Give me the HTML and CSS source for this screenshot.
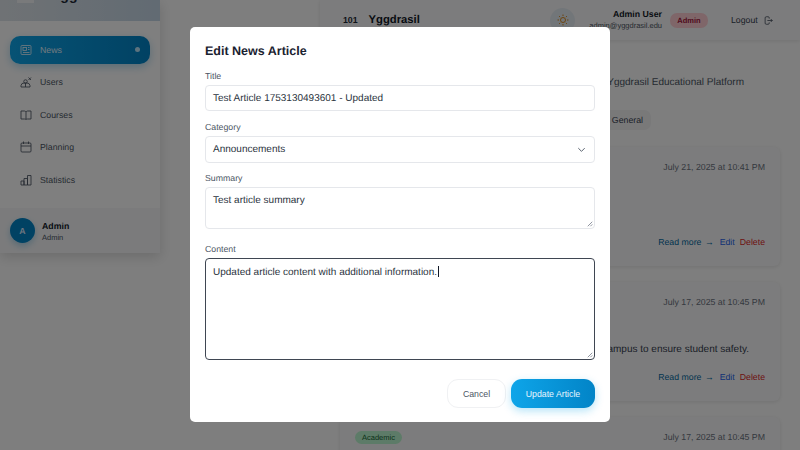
FILE: index.html
```html
<!DOCTYPE html>
<html>
<head>
    <title>Yggdrasil - News</title>
    <link rel="stylesheet" href="styles.css">
</head>
<body>
    <div class="app">
        <aside class="sidebar">
            <div class="brand"><span class="brand-logo"></span><span class="brand-name">Ygg</span></div>
            <nav class="side-nav">
                <a class="nav-item active" href="#">
                    <svg class="nav-icon" viewBox="0 0 24 24"><rect x="2" y="3" width="20" height="18" rx="2"/><rect x="6" y="7" width="7" height="6"/><path d="M16 7h3M16 11h3M6 17h13"/></svg>
                    <span>News</span><span class="nav-dot"></span>
                </a>
                <a class="nav-item" href="#">
                    <svg class="nav-icon" viewBox="0 0 24 24"><circle cx="11" cy="11" r="3.5"/><path d="M2 22v-3a6 6 0 0 1 6-5h6a6 6 0 0 1 6 5v3zM11 14v8M17 3l5 5M22 3l-5 5"/></svg>
                    <span>Users</span>
                </a>
                <a class="nav-item" href="#">
                    <svg class="nav-icon" viewBox="0 0 24 24"><path d="M12 6a4 4 0 0 0-3-2H2v16h7a4 4 0 0 1 3 1 4 4 0 0 1 3-1h7V4h-7a4 4 0 0 0-3 2zM12 6v15"/></svg>
                    <span>Courses</span>
                </a>
                <a class="nav-item" href="#">
                    <svg class="nav-icon" viewBox="0 0 24 24"><rect x="2" y="4" width="20" height="18" rx="2"/><path d="M7 1v5M17 1v5M2 10h20"/></svg>
                    <span>Planning</span>
                </a>
                <a class="nav-item" href="#">
                    <svg class="nav-icon" viewBox="0 0 24 24"><path d="M2 14h6v8H2zM8 9h7v13H8zM15 3h7v19h-7z"/></svg>
                    <span>Statistics</span>
                </a>
            </nav>
            <div class="side-user">
                <div class="avatar">A</div>
                <div class="side-user-text">
                    <div class="side-user-name">Admin</div>
                    <div class="side-user-role">Admin</div>
                </div>
            </div>
        </aside>

        <main class="content">
            <header class="topbar">
                <div class="topbar-brand"><span class="topbar-num">101</span><span class="topbar-name">Yggdrasil</span></div>
                <div class="theme-btn">
                    <svg viewBox="0 0 24 24"><circle cx="12" cy="12" r="5"/><path d="M12 1v3M12 20v3M1 12h3M20 12h3M4.2 4.2l2.1 2.1M17.7 17.7l2.1 2.1M4.2 19.8l2.1-2.1M17.7 6.3l2.1-2.1"/></svg>
                </div>
                <div class="topbar-user">
                    <div class="topbar-user-name">Admin User</div>
                    <div class="topbar-user-mail">admin@yggdrasil.edu</div>
                </div>
                <span class="role-badge">Admin</span>
                <a class="logout" href="#">Logout
                    <svg viewBox="0 0 24 24"><path d="M14 7V5a3 3 0 0 0-3-3H6a3 3 0 0 0-3 3v14a3 3 0 0 0 3 3h5a3 3 0 0 0 3-3v-2M9 12h13M18 8l4 4-4 4"/></svg>
                </a>
            </header>

            <p class="intro">Yggdrasil Educational Platform</p>
            <div class="filters"><span class="filter-pill">General</span></div>

            <article class="card card-tall">
                <div class="card-head"><span></span><span class="card-date">July 21, 2025 at 10:41 PM</span></div>
                <div class="card-links"><a class="link-read" href="#">Read more <span class="arrow">→</span></a><a class="link-edit" href="#">Edit</a><a class="link-delete" href="#">Delete</a></div>
            </article>
            <article class="card card-tall">
                <div class="card-head"><span></span><span class="card-date">July 17, 2025 at 10:45 PM</span></div>
                <p class="card-summary">campus to ensure student safety.</p>
                <div class="card-links"><a class="link-read" href="#">Read more <span class="arrow">→</span></a><a class="link-edit" href="#">Edit</a><a class="link-delete" href="#">Delete</a></div>
            </article>
            <article class="card">
                <div class="card-head"><span class="tag-academic">Academic</span><span class="card-date">July 17, 2025 at 10:45 PM</span></div>
            </article>
        </main>
    </div>

    <div class="overlay">
        <form class="modal">
            <h2 class="modal-title">Edit News Article</h2>

            <label class="field-label">Title</label>
            <div class="field-box field-input">Test Article 1753130493601 - Updated</div>

            <label class="field-label">Category</label>
            <div class="field-box field-select">
                <span>Announcements</span>
                <svg viewBox="0 0 24 24"><path d="M5 9l7 7 7-7"/></svg>
            </div>

            <label class="field-label">Summary</label>
            <div class="field-box field-summary">Test article summary
                <svg class="grip" viewBox="0 0 8 8"><path d="M1 7l6-6M4.5 7L7 4.5"/></svg>
            </div>

            <label class="field-label">Content</label>
            <div class="field-box field-content"><span>Updated article content with additional information.<span class="caret"></span></span>
                <svg class="grip" viewBox="0 0 8 8"><path d="M1 7l6-6M4.5 7L7 4.5"/></svg>
            </div>

            <div class="modal-actions">
                <button class="btn-cancel" type="button">Cancel</button>
                <button class="btn-save" type="button">Update Article</button>
            </div>
        </form>
    </div>
</body>
</html>
```

FILE: styles.css
```css
* {
    box-sizing: border-box;
}
html, body {
    margin: 0;
    padding: 0;
    height: 450px;
    overflow: hidden;
}
body {
    font-family: "Liberation Sans", Arial, sans-serif;
    text-rendering: geometricPrecision;
    background-color: #fdfdfd;
    color: #1f2937;
}
a {
    text-decoration: none;
}

/* page behind the dialog, scrolled down a little */
.app {
    display: flex;
    height: 450px;
    overflow: hidden;
}
.sidebar {
    width: 160px;
    height: 253px;
    flex-shrink: 0;
    display: flex;
    flex-direction: column;
    background-color: #fff;
    box-shadow: 0 4px 12px rgba(0, 0, 0, 0.15);
}
.brand {
    height: 21px;
    flex-shrink: 0;
    display: flex;
    align-items: flex-start;
    gap: 17px;
    padding-left: 17px;
    background: linear-gradient(90deg, #dfe5ea, #c4d6e6);
    overflow: hidden;
}
.brand-logo {
    width: 17px;
    height: 3px;
    background-color: #f3f4f6;
}
.brand-name {
    margin-top: -13px;
    font-size: 14px;
    line-height: 16px;
    font-weight: bold;
}
.side-nav {
    flex: 1;
    padding: 15px 10px 0;
    display: flex;
    flex-direction: column;
    gap: 5px;
}
.nav-item {
    height: 27.5px;
    display: flex;
    align-items: center;
    gap: 8px;
    padding-left: 10px;
    border-radius: 10px;
    font-size: 8.75px;
    color: #4b5563;
}
.nav-item.active {
    background: linear-gradient(90deg, #0ea5e9, #0284c7);
    color: #e0f2fe;
    box-shadow: 0 3px 8px rgba(2, 132, 199, 0.3);
}
.nav-icon {
    width: 12px;
    height: 12px;
    fill: none;
    stroke: currentColor;
    stroke-width: 1.7;
}
.nav-dot {
    width: 5px;
    height: 5px;
    margin-left: auto;
    margin-right: 10px;
    border-radius: 50%;
    background-color: #bae6fd;
}
.side-user {
    height: 45px;
    display: flex;
    align-items: center;
    gap: 7px;
    padding-left: 10px;
    background-color: #f6f7f9;
}
.avatar {
    width: 25px;
    height: 25px;
    border-radius: 50%;
    display: flex;
    align-items: center;
    justify-content: center;
    background-color: #0284c7;
    color: #dbeafe;
    font-size: 8.75px;
    font-weight: bold;
    box-shadow: 0 3px 6px rgba(2, 132, 199, 0.3);
}
.side-user-text {
    padding-top: 3px;
}
.side-user-name {
    font-size: 8.75px;
    line-height: 11px;
    font-weight: bold;
    color: #111827;
}
.side-user-role {
    font-size: 7.5px;
    line-height: 11px;
    color: #4b5563;
}

.content {
    width: 480px;
    margin-left: 160px;
}
.topbar {
    height: 40px;
    display: flex;
    align-items: center;
    padding-left: 23px;
    background-color: #f9f9fa;
    box-shadow: 0 1px 4px rgba(0, 0, 0, 0.1);
}
.topbar-brand {
    width: 207px;
    display: flex;
    align-items: center;
    gap: 11px;
}
.topbar-num {
    font-size: 8.75px;
    font-weight: bold;
    color: #1f2937;
}
.topbar-name {
    font-size: 11.25px;
    font-weight: bold;
    color: #111827;
}
.theme-btn {
    width: 25px;
    height: 25px;
    border-radius: 50%;
    display: flex;
    align-items: center;
    justify-content: center;
    background-color: #e5ecf3;
}
.theme-btn svg {
    width: 12px;
    height: 12px;
    fill: none;
    stroke: #d98a1f;
    stroke-width: 2;
}
.topbar-user {
    width: 87px;
    text-align: right;
}
.topbar-user-name {
    font-size: 8.75px;
    line-height: 11px;
    font-weight: bold;
    color: #111827;
}
.topbar-user-mail {
    font-size: 7.5px;
    line-height: 11px;
    color: #4b5563;
}
.role-badge {
    width: 38px;
    margin-left: 8px;
    padding: 3px 0;
    border-radius: 7px;
    text-align: center;
    background-color: #fecdd3;
    color: #9f1239;
    font-size: 7.5px;
    font-weight: bold;
}
.logout {
    margin-left: 23px;
    display: flex;
    align-items: center;
    gap: 6px;
    font-size: 8.75px;
    color: #374151;
}
.logout svg {
    width: 9px;
    height: 9px;
    fill: none;
    stroke: currentColor;
    stroke-width: 2;
}
.intro {
    margin: 37px 56px 0 0;
    text-align: right;
    font-size: 10px;
    line-height: 12px;
    color: #4b5563;
}
.filters {
    margin: 21px 149px 0 0;
    display: flex;
    justify-content: flex-end;
}
.filter-pill {
    padding: 5px 8px;
    line-height: 10px;
    border-radius: 7px;
    background-color: #f2f2f3;
    font-size: 8.75px;
    color: #374151;
}
.card {
    width: 440px;
    margin: 16px 0 0 20px;
    padding: 15px;
    border-radius: 6px;
    background-color: #f9f9fa;
    box-shadow: 0 1px 4px rgba(0, 0, 0, 0.1);
}
.filters + .card {
    margin-top: 17px;
}
.card-tall {
    height: 119px;
    display: flex;
    flex-direction: column;
    padding-bottom: 19px;
}
.card-head {
    height: 10px;
    display: flex;
    justify-content: space-between;
    align-items: center;
}
.card-date {
    font-size: 8.75px;
    color: #6b7280;
}
.card-summary {
    margin: auto 16px 0 0;
    text-align: right;
    font-size: 10px;
    line-height: 12px;
    color: #374151;
}
.card-links {
    margin-top: auto;
    display: flex;
    justify-content: flex-end;
    gap: 5px;
    font-size: 8.75px;
    line-height: 10px;
}
.card-summary + .card-links {
    margin-top: 16px;
}
.arrow {
    margin-left: 1px;
}
.link-read {
    color: #0369a1;
}
.link-edit {
    margin-left: 1px;
    color: #2563eb;
}
.link-delete {
    color: #dc2626;
}
.tag-academic {
    padding: 2px 7px;
    border-radius: 7px;
    background-color: #bbf7d0;
    color: #166534;
    font-size: 7.5px;
}

/* dialog */
.overlay {
    position: fixed;
    inset: 0;
    display: flex;
    align-items: center;
    justify-content: center;
    background-color: rgba(0, 0, 0, 0.5);
    backdrop-filter: blur(0.6px);
}
.modal {
    width: 420px;
    height: 395px;
    margin-top: -1px;
    padding: 15px;
    display: flex;
    flex-direction: column;
    border-radius: 5px;
    background-color: #fff;
}
.modal-title {
    margin: 0 0 10px;
    font-size: 12.5px;
    line-height: 18px;
    color: #1a2230;
}
.field-label {
    font-size: 8.75px;
    line-height: 12px;
    color: #4b5563;
    margin-bottom: 3px;
}
.field-box {
    position: relative;
    flex-shrink: 0;
    border: 1px solid #e5e7eb;
    border-radius: 4px;
    padding: 0 7px;
    font-size: 10px;
    color: #2b3440;
    margin-bottom: 10px;
}
.field-input {
    height: 26px;
    line-height: 25px;
}
.field-select {
    height: 26.5px;
    margin-bottom: 9.5px;
    display: flex;
    align-items: center;
    justify-content: space-between;
}
.field-select svg {
    width: 11px;
    height: 11px;
    fill: none;
    stroke: #4b5563;
    stroke-width: 2;
}
.field-summary {
    height: 42px;
    padding-top: 7px;
    margin-bottom: 14px;
}
.field-content {
    height: 102px;
    padding-top: 7px;
    margin-bottom: 0;
    border-color: #3f4652;
}
.caret {
    display: inline-block;
    width: 1px;
    height: 11px;
    margin-left: 1px;
    vertical-align: -2px;
    background-color: #111827;
}
.grip {
    position: absolute;
    right: 1px;
    bottom: 1px;
    width: 6px;
    height: 6px;
    fill: none;
    stroke: #6b7280;
    stroke-width: 1;
}
.modal-actions {
    display: flex;
    justify-content: flex-end;
    gap: 5px;
    margin-top: 19px;
}
.modal-actions button {
    height: 29px;
    border-radius: 11px;
    font-family: inherit;
    font-size: 8.75px;
}
.btn-cancel {
    width: 59px;
    border: 1px solid #f0f1f3;
    background-color: #fff;
    color: #4b5563;
}
.btn-save {
    width: 84px;
    border: none;
    background: linear-gradient(90deg, #0ea5e9, #0284c7);
    color: #e8f6fe;
    box-shadow: 0 3px 8px rgba(14, 165, 233, 0.3);
}
```
